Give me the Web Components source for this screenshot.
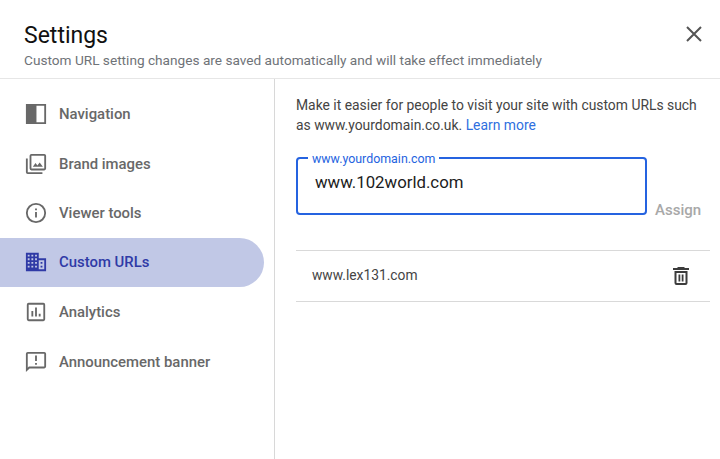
<!DOCTYPE html>
<html>
<head>
<meta charset="utf-8">
<title>Settings</title>
<style>
  html, body { margin: 0; padding: 0; background: #fff; }
  body { width: 720px; height: 459px; overflow: hidden; font-family: Roboto, "Liberation Sans", sans-serif; }
</style>
</head>
<body>
<settings-dialog>
  <settings-header slot="header" title="Settings" subtitle="Custom URL setting changes are saved automatically and will take effect immediately"></settings-header>
  <settings-nav slot="nav">
    <nav-item icon="navigation">Navigation</nav-item>
    <nav-item icon="images">Brand images</nav-item>
    <nav-item icon="info">Viewer tools</nav-item>
    <nav-item icon="domain" active>Custom URLs</nav-item>
    <nav-item icon="chart">Analytics</nav-item>
    <nav-item icon="announce">Announcement banner</nav-item>
  </settings-nav>
  <custom-urls slot="content"></custom-urls>
</settings-dialog>

<script>
const ICONS = {
  navigation: '<path fill-rule="evenodd" d="M1 1h22v22H1zM12.500 3v18H21V3z"/>',
  images: '<path d="M3 6H1v15a2 2 0 0 0 2 2h16v-2H3z"/><path fill-rule="evenodd" d="M7 1h14a2 2 0 0 1 2 2v14a2 2 0 0 1-2 2H7a2 2 0 0 1-2-2V3a2 2 0 0 1 2-2zm0 2v14h14V3z"/><path d="M8.500 15l3-4 2 2.600 2.500-3.300 3.500 4.700z"/>',
  info: '<path fill-rule="evenodd" d="M12 1a11 11 0 1 1 0 22 11 11 0 0 1 0-22zm0 2a9 9 0 1 0 0 18 9 9 0 0 0 0-18z"/><path d="M11 11h2v6h-2zM11 7h2v2h-2z"/>',
  domain: '<path fill-rule="evenodd" d="M1 2h14v6h8v14H1zM3 4v2h2V4zm4 0v2h2V4zm4 0v2h2V4zM3 8v2h2V8zm4 0v2h2V8zm4 0v2h2V8zM3 12v2h2v-2zm4 0v2h2v-2zm4 0v2h2v-2zM3 16v2h2v-2zm4 0v2h2v-2zm4 0v2h2v-2zM15 10v10h6V10zm2 2h2v2h-2zm0 4h2v2h-2z"/>',
  chart: '<path fill-rule="evenodd" d="M4 2h16a2 2 0 0 1 2 2v16a2 2 0 0 1-2 2H4a2 2 0 0 1-2-2V4a2 2 0 0 1 2-2zm0 2v16h16V4z"/><path d="M7 11h2v6H7zM11 7h2v10h-2zM15 14h2v3h-2z"/>',
  announce: '<path fill-rule="evenodd" d="M3 1h18a2 2 0 0 1 2 2v14a2 2 0 0 1-2 2H5l-4 4V3a2 2 0 0 1 2-2zm0 2v15.200L4.200 17H21V3z"/><path d="M11 5h2v6h-2zM11 13h2v2h-2z"/>'
};

class SettingsDialog extends HTMLElement {
  constructor() {
    super();
    this.attachShadow({ mode: 'open' });
  }

  connectedCallback() {
    this.shadowRoot.innerHTML = `
      <style>
        :host { display: flex; flex-direction: column; width: 720px; height: 459px; background: #fff; }
        .body { display: flex; flex: 1; min-height: 0; }
        .nav { width: 274px; border-right: 1px solid #d8d8d8; flex: none; }
        .content { flex: 1; min-width: 0; }
      </style>
      <slot name="header"></slot>
      <div class="body">
        <div class="nav"><slot name="nav"></slot></div>
        <div class="content"><slot name="content"></slot></div>
      </div>
    `;
  }
}

class SettingsHeader extends HTMLElement {
  constructor() {
    super();
    this.attachShadow({ mode: 'open' });
  }

  connectedCallback() {
    this.shadowRoot.innerHTML = `
      <style>
        :host { display: flex; justify-content: space-between; height: 79px; box-sizing: border-box; padding: 22px 17px 0 24px; border-bottom: 1px solid #e6e6e6; }
        h1 { margin: 0; font: 400 23px/28px Roboto, sans-serif; color: #111; }
        p { margin: 2px 0 0; font: 400 13.65px/16px Roboto, sans-serif; color: #6f7378; }
        button { all: unset; width: 18px; height: 18px; margin-top: 3px; display: block; }
        svg { display: block; }
      </style>
      <div>
        <h1>${this.getAttribute('title')}</h1>
        <p>${this.getAttribute('subtitle')}</p>
      </div>
      <button aria-label="Close">
        <svg width="18" height="18" viewBox="0 0 18 18"><path d="M2 2l14 14M16 2L2 16" stroke="#555" stroke-width="2" fill="none"/></svg>
      </button>
    `;
  }
}

class SettingsNav extends HTMLElement {
  constructor() {
    super();
    this.attachShadow({ mode: 'open' });
  }

  connectedCallback() {
    this.shadowRoot.innerHTML = `
      <style>
        :host { display: flex; flex-direction: column; padding: 10px 10px 0 0; }
      </style>
      <slot></slot>
    `;
  }
}

class NavItem extends HTMLElement {
  constructor() {
    super();
    this.attachShadow({ mode: 'open' });
  }

  connectedCallback() {
    const icon = ICONS[this.getAttribute('icon')];
    this.shadowRoot.innerHTML = `
      <style>
        :host { display: flex; align-items: center; gap: 12px; height: 49.5px; box-sizing: border-box; padding: 1px 0 0 25px; border-radius: 0 25px 25px 0; font: 500 14.9px Roboto, sans-serif; color: #686868; }
        :host([active]) { background: #c1c8e6; color: #2f3aa6; padding-top: 0; }
        svg { width: 22px; height: 22px; fill: currentColor; flex: none; }
      </style>
      <svg viewBox="0 0 24 24">${icon}</svg>
      <slot></slot>
    `;
  }
}

class CustomUrls extends HTMLElement {
  constructor() {
    super();
    this.attachShadow({ mode: 'open' });
  }

  connectedCallback() {
    this.shadowRoot.innerHTML = `
      <style>
        :host { display: block; padding: 16px 10px 0 21px; font-family: Roboto, sans-serif; }
        .intro { font-size: 13.88px; line-height: 20px; color: #444; }
        .intro div { height: 20px; }
        a { color: #2f6fe0; text-decoration: none; }
        .form { display: flex; align-items: flex-end; gap: 8px; margin-top: 22px; }
        .assign { font-size: 15px; font-weight: 500; color: #a8a8a8; line-height: 14px; margin-bottom: -2px; }
        .row { display: flex; align-items: center; justify-content: space-between; height: 50px; margin-top: 35px; padding: 0 19px 0 16px; border-top: 1px solid #d9d9d9; border-bottom: 1px solid #d9d9d9; font-size: 13.8px; color: #444; }
        .row span { margin-top: -3px; }
        svg { display: block; margin-top: -1px; }
      </style>
      <div class="intro">
        <div>Make it easier for people to visit your site with custom URLs such</div>
        <div><span>as www.yourdomain.co.uk.</span> <a href="#">Learn more</a></div>
      </div>
      <div class="form">
        <url-field label="www.yourdomain.com" value="www.102world.com"></url-field>
        <span class="assign">Assign</span>
      </div>
      <div class="row">
        <span>www.lex131.com</span>
        <svg width="20" height="20" viewBox="0 0 20 20" fill="#3c3c3c"><path fill-rule="evenodd" d="M7 1h6l1 1h4v2H2V2h4zM3.500 5h13v12a2 2 0 0 1-2 2h-9a2 2 0 0 1-2-2zm2 2v10h9V7z"/><path d="M7.500 8.500h1.800v7H7.500zM10.700 8.500h1.800v7h-1.800z"/></svg>
      </div>
    `;
  }
}

class UrlField extends HTMLElement {
  constructor() {
    super();
    this.attachShadow({ mode: 'open' });
  }

  connectedCallback() {
    this.shadowRoot.innerHTML = `
      <style>
        :host { display: block; position: relative; width: 351px; height: 58px; box-sizing: border-box; border: 2px solid #2563e0; border-radius: 4px; flex: none; }
        label { position: absolute; left: 10px; top: -7px; padding: 0 4px; background: #fff; font: 400 12.4px/13px Roboto, sans-serif; color: #2563e0; }
        .value { padding: 13px 0 0 17px; font: 400 16.8px/20px Roboto, sans-serif; color: #1c1c1c; }
      </style>
      <label>${this.getAttribute('label')}</label>
      <div class="value">${this.getAttribute('value')}</div>
    `;
  }
}

customElements.define('settings-dialog', SettingsDialog);
customElements.define('settings-header', SettingsHeader);
customElements.define('settings-nav', SettingsNav);
customElements.define('nav-item', NavItem);
customElements.define('custom-urls', CustomUrls);
customElements.define('url-field', UrlField);
</script>
</body>
</html>
